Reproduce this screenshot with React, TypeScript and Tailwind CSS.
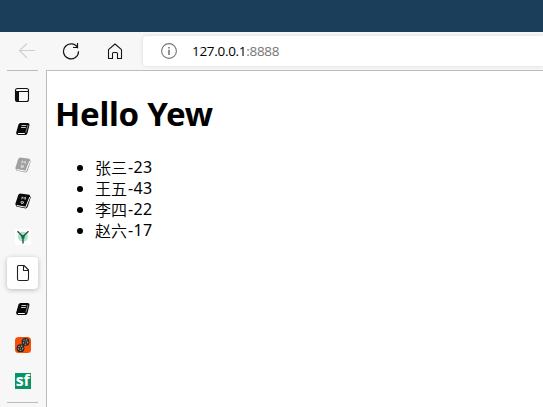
import type { ReactNode } from 'react';

const people = [
  { name: '张三', age: 23 },
  { name: '王五', age: 43 },
  { name: '李四', age: 22 },
  { name: '赵六', age: 17 },
];

function BackIcon() {
  return (
    <svg width="18" height="18" viewBox="0 0 18 18" fill="none" stroke="#cfcfcf" strokeWidth="1.1">
      <path d="M17 8.500H1.500M9 1.500L1.500 8.500L9 16" />
    </svg>
  );
}

function ReloadIcon() {
  return (
    <svg width="18" height="18" viewBox="0 0 18 18" fill="none" stroke="#151515" strokeWidth="1.2">
      <path d="M15.800 6.200A7.500 7.500 0 1 0 16.500 9.200M15.500 1V5.500H11" />
    </svg>
  );
}

function HomeIcon() {
  return (
    <svg width="16" height="17" viewBox="0 0 16 17" fill="none" stroke="#151515" strokeWidth="1.1" strokeLinejoin="round">
      <path d="M1.500 6.700L8 1L14.500 6.700V15.500H10.500V11Q10.500 9.500 9.500 9.500H6.500Q5.500 9.500 5.500 11V15.500H1.500Z" />
    </svg>
  );
}

function InfoIcon() {
  return (
    <svg width="16" height="16" viewBox="0 0 16 16" fill="none" stroke="#777">
      <circle cx="8" cy="8" r="7.400" strokeWidth="1.1" />
      <path d="M8 6.700V12M8 4V5.400" strokeWidth="1.600" />
    </svg>
  );
}

function TabsIcon() {
  return (
    <svg width="16" height="16" viewBox="0 0 16 16">
      <rect x="1.500" y="1.500" width="13" height="13" rx="2" fill="none" stroke="#111" strokeWidth="1.1" />
      <path d="M1.500 4.500H5V14.500H3L1.500 13Z" fill="#111" />
      <path d="M1.500 4.500H14.500" stroke="#111" />
    </svg>
  );
}

function BookIcon() {
  return (
    <svg width="16" height="16" viewBox="0 0 16 16">
      <path d="M5.500 2H12.500Q14.800 2 14.500 4L12.500 12Q12 14 10.500 14H3Q.8 13.500 1.200 11.500L3.500 3.500Q4 2 5.500 2Z" fill="#090909" />
      <path d="M6.500 4.500H11.300M6 6.500H10.800" stroke="#ddd" strokeWidth=".9" />
      <path d="M3 12.500H9.800" stroke="#fff" strokeWidth="1" />
      <path d="M10.800 11.500L13 4" stroke="#bbb" strokeWidth=".7" />
    </svg>
  );
}

function ManualIcon({ color }: { color: string }) {
  return (
    <svg width="16" height="16" viewBox="0 0 16 16">
      <path d="M5 .5L14.500 1.700L15.700 4.500L12.500 14.200L10.700 15.500L1.300 13.500L.3 11L3.300 1.700Z" fill={color} />
      <path d="M1.700 12.500L10.800 14.200L14.800 4" fill="none" stroke="#fff" strokeWidth="1" />
      <path d="M6.800 6.300L7.300 3.800L8.700 5.300L10.500 4.300L10.100 6.800M6.200 8.500L6 10Q7 11 8.300 10.200L8.600 8.900Z" fill="none" stroke="#eee" strokeWidth=".8" />
    </svg>
  );
}

function YewIcon() {
  return (
    <svg width="16" height="16" viewBox="0 0 16 16">
      <rect width="16" height="16" fill="#fff" />
      <circle cx="8" cy="7.700" r="5" fill="#a6e5c6" />
      <circle cx="8" cy="8" r="2.200" fill="#55b58c" />
      <path d="M2.500 2.200L7.800 7.700L13.500 2.200M8 7.500V14.500" fill="none" stroke="#3c484a" strokeWidth="1.400" />
      <circle cx="8" cy="7.700" r="1.400" fill="#087044" />
    </svg>
  );
}

function PageIcon() {
  return (
    <svg width="16" height="18" viewBox="0 0 16 18" fill="none" stroke="#202020" strokeWidth="1.100" strokeLinejoin="round">
      <path d="M3.500 1.500H9L13.500 6V15Q13.500 16.500 12 16.500H4Q2.500 16.500 2.500 15V2.500Q2.500 1.500 3.500 1.500ZM8.500 1.500V6.500H13.500" />
    </svg>
  );
}

function BearingsIcon() {
  return (
    <svg width="16" height="16" viewBox="0 0 16 16">
      <rect width="16" height="16" rx="3.500" fill="#f4500b" />
      <circle cx="10.500" cy="4.900" r="3.900" fill="#25221f" />
      <circle cx="5.500" cy="11.200" r="3.900" fill="#25221f" />
      <g fill="none" stroke="#aaa199" strokeWidth="1.100" strokeDasharray="1.500 1">
        <circle cx="10.500" cy="4.900" r="2.300" />
        <circle cx="5.500" cy="11.200" r="2.300" />
      </g>
      <path d="M9.800 4.900H11.200M4.800 11.200H6.200" stroke="#aaa199" />
    </svg>
  );
}

function SfIcon() {
  return (
    <span className="flex size-4 items-center justify-center bg-[#079464] pb-[2px] font-['Open_Sans',sans-serif] text-[16px] leading-none font-bold tracking-[-0.2px] text-white">
      sf
    </span>
  );
}

function SideTab({ children, active = false }: { children: ReactNode; active?: boolean }) {
  return (
    <div className="flex h-9 shrink-0 items-center justify-center">
      <div
        className={
          active
            ? 'flex h-8 w-[31px] items-center justify-center rounded-[4px] bg-white shadow-[0_1px_5px_rgba(0,0,0,0.25)]'
            : 'flex h-8 w-[31px] items-center justify-center'
        }
      >
        {children}
      </div>
    </div>
  );
}

export default function App() {
  return (
    <div className="flex h-[407px] w-[543px] flex-col overflow-hidden bg-[#f7f7f7] font-['Noto_Sans','Noto_Sans_CJK_SC',sans-serif] text-black">
      <div className="h-8 shrink-0 bg-[#1b3f5b]" />
      <div className="flex h-[38px] shrink-0 items-center pl-[18px]">
        <BackIcon />
        <div className="ml-[26px]"><ReloadIcon /></div>
        <div className="ml-[27px]"><HomeIcon /></div>
        <div className="ml-5 flex h-[30px] flex-1 items-center rounded-l-[4px] bg-white pl-[18px] shadow-[0_0_4px_rgba(0,0,0,0.12)]">
          <InfoIcon />
          <span className="ml-[15px] font-['Open_Sans',sans-serif] text-[13.5px] leading-5 tracking-[-0.3px]">
            127.0.0.1<span className="text-[#777]">:8888</span>
          </span>
        </div>
      </div>
      <div className="flex min-h-0 flex-1">
        <aside className="flex w-[46px] shrink-0 flex-col">
          <div className="ml-[7px] h-px w-[31px] shrink-0 bg-[#bcbcbc]" />
          <div className="mt-[7px] flex h-[34px] shrink-0 items-center pl-[14px]"><TabsIcon /></div>
          <div className="-mt-px flex flex-col pr-px">
            <SideTab><BookIcon /></SideTab>
            <SideTab><ManualIcon color="#a0a0a0" /></SideTab>
            <SideTab><ManualIcon color="#090909" /></SideTab>
            <SideTab><YewIcon /></SideTab>
            <SideTab active><PageIcon /></SideTab>
            <SideTab><BookIcon /></SideTab>
            <SideTab><BearingsIcon /></SideTab>
            <SideTab><SfIcon /></SideTab>
          </div>
          <div className="mt-[3px] ml-[7px] h-px w-[31px] shrink-0 bg-[#bcbcbc]" />
        </aside>
        <main className="flex-1 border-t border-l border-[#bcbcbc] bg-white pt-[21px] pl-2">
          <h1 className="text-[33px] leading-[43px] font-bold tracking-[-0.25px]">Hello Yew</h1>
          <ul className="mt-[22px]">
            {people.map(({ name, age }) => (
              <li key={name} className="flex h-[21px] items-center pl-[22px] text-[16px] leading-[21px]">
                <span className="mr-3 size-[6px] rounded-full bg-black" />
                <span className="font-['Noto_Sans_CJK_SC',sans-serif] font-[350]">{name}</span>
                <span className="ml-px tracking-[0.3px]">-{age}</span>
              </li>
            ))}
          </ul>
        </main>
      </div>
    </div>
  );
}
